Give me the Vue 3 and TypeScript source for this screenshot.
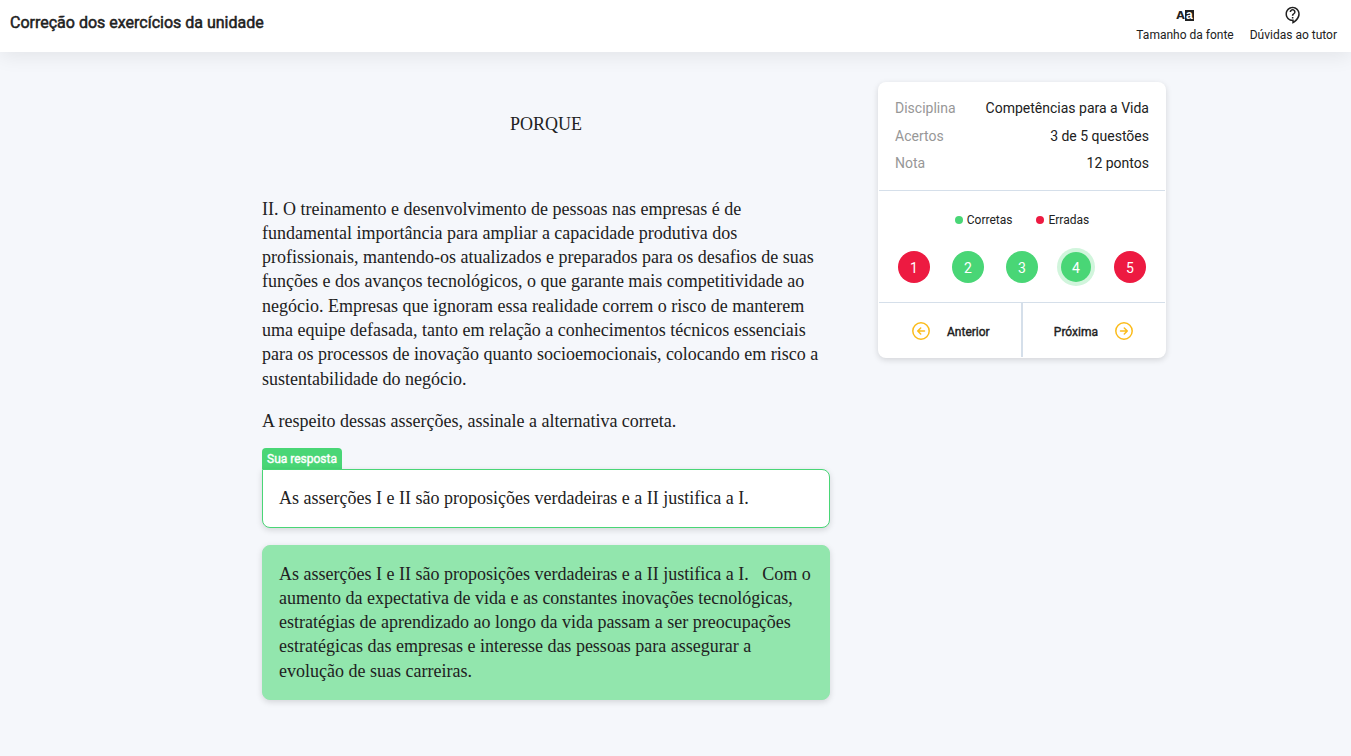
<script setup lang="ts">
interface Question {
  number: number
  correct: boolean
  current?: boolean
}

const summary = [
  { label: 'Disciplina', value: 'Competências para a Vida' },
  { label: 'Acertos', value: '3 de 5 questões' },
  { label: 'Nota', value: '12 pontos' },
]

const questions: Question[] = [
  { number: 1, correct: false },
  { number: 2, correct: true },
  { number: 3, correct: true },
  { number: 4, correct: true, current: true },
  { number: 5, correct: false },
]
</script>

<template>
  <div class="page">
    <header class="topbar">
      <h1 class="title">Correção dos exercícios da unidade</h1>
      <nav class="tools">
        <button class="tool" type="button">
          <span class="font-icon"><span class="big">A</span><span class="boxed">a</span></span>
          <span>Tamanho da fonte</span>
        </button>
        <button class="tool" type="button">
          <svg class="help-icon" viewBox="0 0 24 24" width="18" height="18" fill="currentColor">
            <path d="M11 23.59v-3.6c-5.01-.26-9-4.42-9-9.49C2 5.26 6.26 1 11.5 1S21 5.26 21 10.5c0 4.95-3.44 9.93-8.57 12.4l-1.43.69zM11.5 3C7.36 3 4 6.36 4 10.5S7.36 18 11.5 18H13v2.3c3.64-2.3 6-6.08 6-9.8C19 6.36 15.64 3 11.5 3zm-1 11.5h2v2h-2v-2zm2-1.5h-2c0-3.25 3-3 3-5 0-1.1-.9-2-2-2s-2 .9-2 2h-2c0-2.21 1.79-4 4-4s4 1.790 4 4c0 2.5-3 2.75-3 5z" />
          </svg>
          <span>Dúvidas ao tutor</span>
        </button>
      </nav>
    </header>

    <main class="layout">
      <article class="content">
        <p class="connector">PORQUE</p>
        <p class="statement">II. O treinamento e desenvolvimento de pessoas nas empresas é de fundamental importância para ampliar a capacidade produtiva dos profissionais, mantendo-os atualizados e preparados para os desafios de suas funções e dos avanços tecnológicos, o que garante mais competitividade ao negócio. Empresas que ignoram essa realidade correm o risco de manterem uma equipe defasada, tanto em relação a conhecimentos técnicos essenciais para os processos de inovação quanto socioemocionais, colocando em risco a sustentabilidade do negócio.</p>
        <p class="prompt">A respeito dessas asserções, assinale a alternativa correta.</p>
        <span class="tag">Sua resposta</span>
        <div class="answer chosen">As asserções I e II são proposições verdadeiras e a II justifica a I.</div>
        <div class="answer feedback">As asserções I e II são proposições verdadeiras e a II justifica a I. &nbsp; Com o aumento da expectativa de vida e as constantes inovações tecnológicas, estratégias de aprendizado ao longo da vida passam a ser preocupações estratégicas das empresas e interesse das pessoas para assegurar a evolução de suas carreiras.</div>
      </article>

      <aside class="panel">
        <dl class="summary">
          <div v-for="row in summary" :key="row.label" class="row">
            <dt>{{ row.label }}</dt>
            <dd>{{ row.value }}</dd>
          </div>
        </dl>
        <section class="progress">
          <div class="legend">
            <span class="key"><i class="dot right"></i>Corretas</span>
            <span class="key"><i class="dot wrong"></i>Erradas</span>
          </div>
          <div class="questions">
            <button
              v-for="q in questions"
              :key="q.number"
              type="button"
              class="question"
              :class="[q.correct ? 'right' : 'wrong', { current: q.current }]"
            >{{ q.number }}</button>
          </div>
        </section>
        <footer class="pager">
          <button class="step prev" type="button">
            <svg class="arrow" viewBox="0 0 18 18" width="18" height="18">
              <circle cx="9" cy="9" r="8.2" />
              <path d="M12.5 9H5.7M8.7 6L5.7 9l3 3" />
            </svg>
            <span class="label">Anterior</span>
          </button>
          <button class="step next" type="button">
            <span class="label">Próxima</span>
            <svg class="arrow" viewBox="0 0 18 18" width="18" height="18">
              <circle cx="9" cy="9" r="8.2" />
              <path d="M5.5 9h6.8M9.3 6l3 3-3 3" />
            </svg>
          </button>
        </footer>
      </aside>
    </main>
  </div>
</template>

<style>
body {
  margin: 0;
  background: #f5f7fb;
}
</style>

<style scoped>
.page {
  box-sizing: border-box;
  height: 756px;
  overflow: hidden;
  background: #f5f7fb;
  color: #212121;
  font-family: Roboto, sans-serif;
}
button {
  border: 0;
  padding: 0;
  margin: 0;
  background: none;
  color: inherit;
  font: inherit;
}
.topbar {
  display: flex;
  justify-content: space-between;
  box-sizing: border-box;
  height: 52px;
  padding: 0 14px 0 10px;
  background: #fff;
  box-shadow: 0 4px 20px rgba(0, 0, 0, 0.08);
}
.title {
  margin: 0;
  padding-top: 13px;
  font-size: 16px;
  line-height: 20px;
  font-weight: 400;
  -webkit-text-stroke: 0.5px currentColor;
}
.tools {
  display: flex;
  gap: 16px;
}
.tool {
  display: flex;
  flex-direction: column;
  align-items: center;
  height: 42px;
  padding-top: 6px;
  font-size: 12px;
  line-height: 14px;
  gap: 4px;
}
.help-icon {
  display: block;
}
.font-icon {
  display: flex;
  align-items: center;
  justify-content: center;
  height: 18px;
  font-family: "DejaVu Sans", sans-serif;
  font-weight: 700;
}
.big {
  padding-top: 2px;
  font-size: 11px;
}
.boxed {
  width: 9px;
  height: 11px;
  background: #212121;
  color: #fff;
  font-family: "Liberation Sans", sans-serif;
  font-size: 12px;
  line-height: 10px;
  text-align: center;
}
.layout {
  display: flex;
  align-items: flex-start;
  gap: 48px;
  padding: 30px 0 0 262px;
}
.content {
  width: 568px;
  padding-top: 30px;
  font-family: "Times New Roman", "Liberation Serif", serif;
  font-size: 18px;
  line-height: 24.3px;
}
.connector {
  margin: 0 0 60.3px;
  text-align: center;
}
.statement {
  margin: 0 0 18px;
}
.prompt {
  margin: 0 0 15px;
}
.tag {
  display: block;
  width: 80px;
  height: 21px;
  border-radius: 4px 4px 0 0;
  background: #49d676;
  color: #fff;
  font: 400 12px/22px Roboto, sans-serif;
  -webkit-text-stroke: 0.4px currentColor;
  text-align: center;
}
.answer {
  box-sizing: border-box;
  padding: 16px;
  border: 1px solid #49d676;
  border-radius: 8px;
  background: #fff;
  box-shadow: 0 2px 6px rgba(0, 0, 0, 0.14);
}
.chosen {
  border-top-left-radius: 0;
  margin-bottom: 17px;
}
.feedback {
  border-color: #92e6ad;
  background: #92e6ad;
}
.panel {
  width: 288px;
  height: 276px;
  border-radius: 8px;
  background: #fff;
  box-shadow: 0 2px 6px rgba(0, 0, 0, 0.14);
}
.summary {
  box-sizing: border-box;
  height: 109px;
  margin: 0 1px;
  padding: 13px 16px 0;
  border-bottom: 1px solid #d5dfea;
  font-size: 14px;
  line-height: 27.6px;
}
.row {
  display: flex;
  justify-content: space-between;
}
.row dt {
  color: #979797;
}
.row dd {
  margin: 0;
}
.progress {
  box-sizing: border-box;
  height: 112px;
  margin: 0 1px;
  padding-top: 22px;
  border-bottom: 1px solid #d5dfea;
}
.legend {
  display: flex;
  justify-content: center;
  gap: 24px;
  font-size: 12px;
  line-height: 14px;
}
.key {
  display: flex;
  align-items: center;
  gap: 4px;
}
.dot {
  width: 8px;
  height: 8px;
  border-radius: 50%;
}
.questions {
  display: flex;
  justify-content: space-between;
  padding: 24px 19px 0;
}
.question {
  width: 32px;
  height: 32px;
  border-radius: 50%;
  color: #fff;
  font-size: 14px;
  line-height: 34px;
  text-align: center;
}
.right {
  background: #49d676;
}
.wrong {
  background: #ed1a41;
}
.current {
  width: 30px;
  height: 30px;
  margin: 1px;
  line-height: 32px;
  box-shadow: 0 0 0 4px #d1f5dc;
}
.pager {
  display: flex;
  height: 54px;
}
.step {
  display: flex;
  align-items: center;
  box-sizing: border-box;
  gap: 17px;
  padding-top: 2px;
  font-size: 12px;
}
.label {
  padding-top: 2px;
  -webkit-text-stroke: 0.4px currentColor;
}
.prev {
  width: 145px;
  padding-left: 34px;
  border-right: 2px solid #d5dfea;
}
.next {
  flex: 1;
  justify-content: flex-end;
  padding-right: 33px;
}
.arrow {
  fill: none;
  stroke: #fbbc1c;
  stroke-width: 1.5;
  stroke-linecap: round;
  stroke-linejoin: round;
}
</style>
